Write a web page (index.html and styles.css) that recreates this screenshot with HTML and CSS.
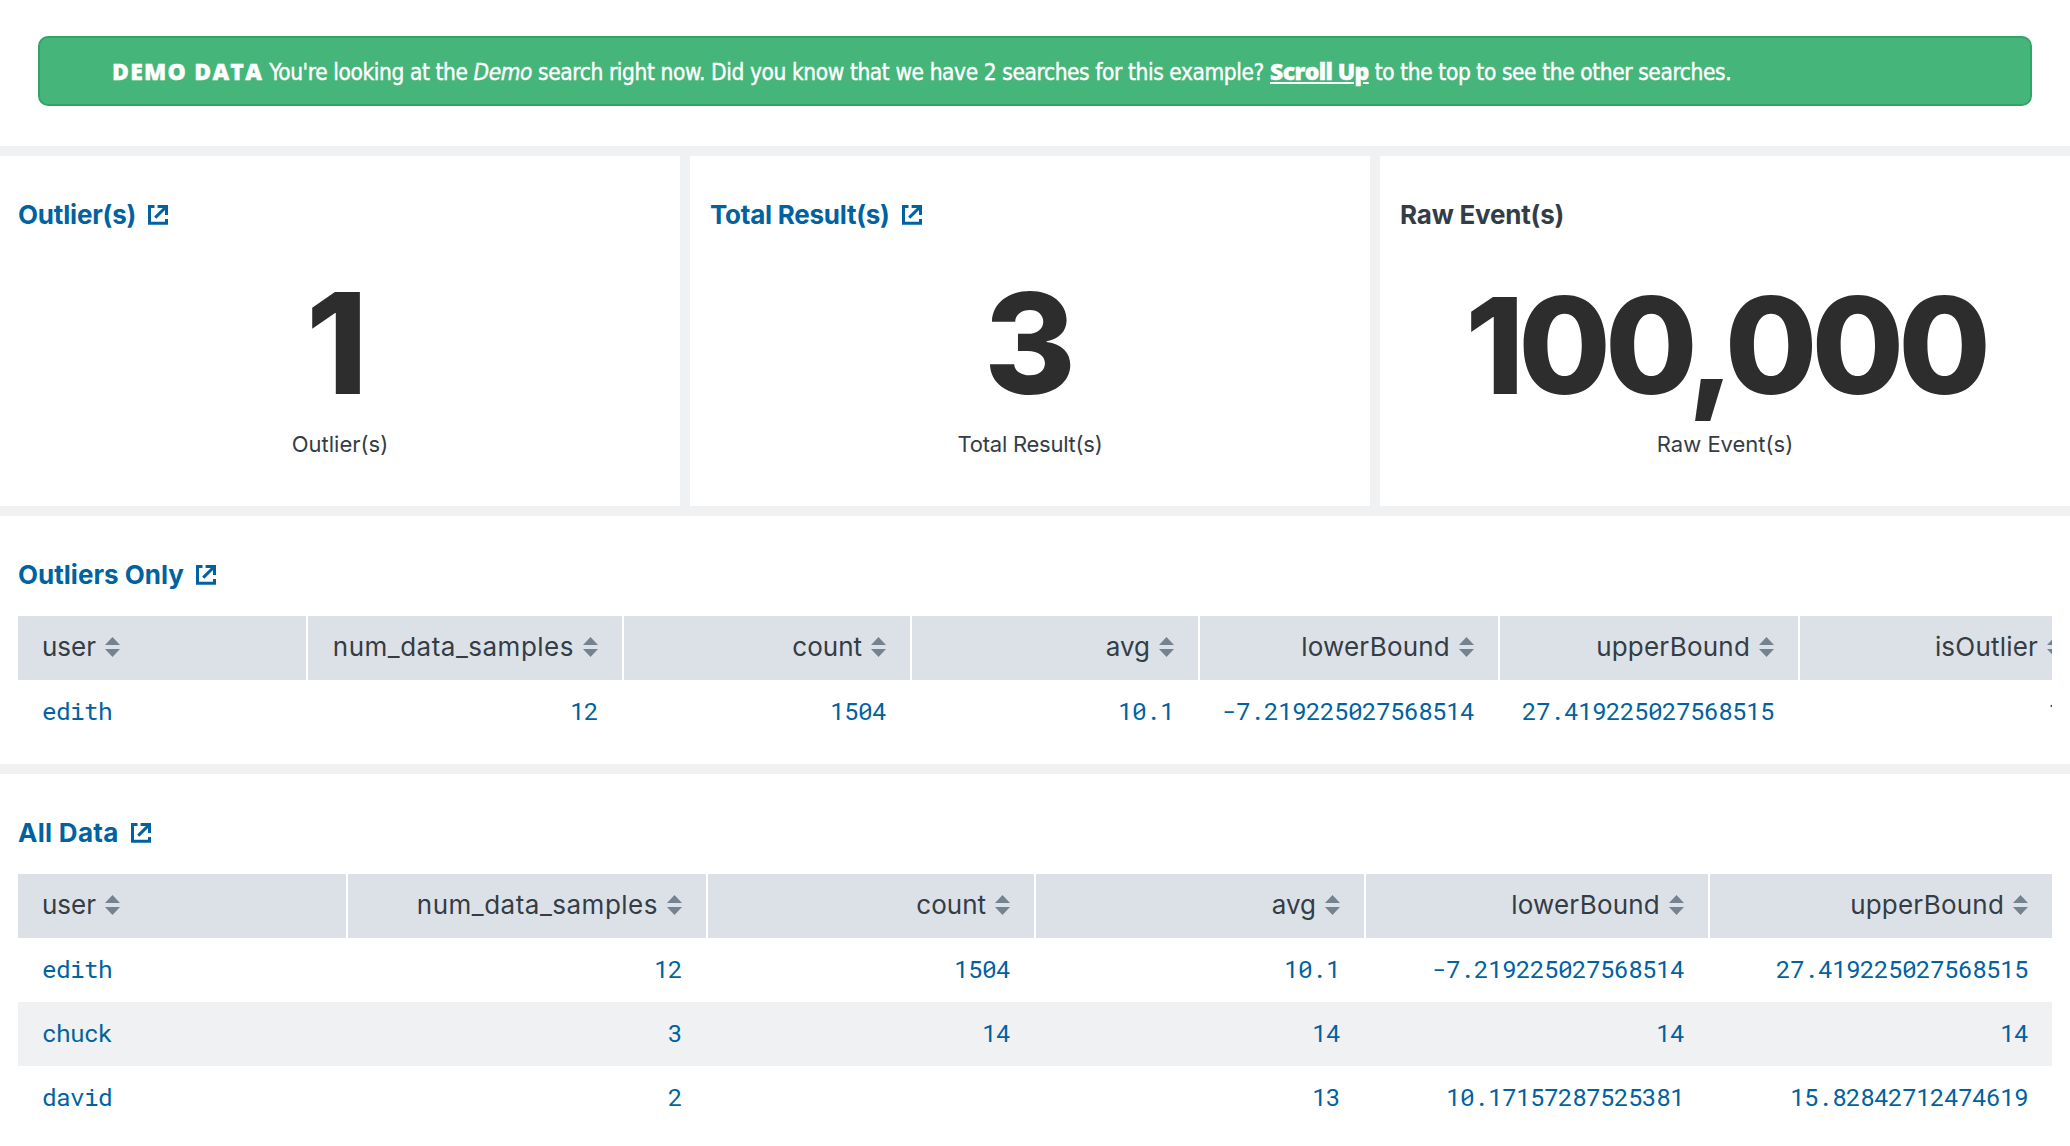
FILE: index.html
```html
<!DOCTYPE html>
<html lang="en">
<head>
<meta charset="utf-8">
<title>Demo Data</title>
<link rel="stylesheet" href="styles.css">
</head>
<body>
<svg class="defs" aria-hidden="true">
  <symbol id="ext" viewBox="0 0 20 20"><path d="M6.5 1.5H1.5V18.3H18.5V14M9.6 1.5H18.5V10M18 2L7.2 12.6" fill="none" stroke="currentColor" stroke-width="3"/></symbol>
  <symbol id="sort" viewBox="0 0 15 20"><path d="M0 8L7.5 0L15 8ZM0 12H15L7.5 20Z" fill="#75828f"/></symbol>
</svg>
<main class="page">
  <section class="intro">
    <div class="banner"><strong class="tag">DEMO DATA</strong> You're looking at the <em>Demo</em> search right now. Did you know that we have 2 searches for this example? <a class="scroll">Scroll Up</a> to the top to see the other searches.</div>
  </section>
  <section class="stats">
    <div class="panel stat">
      <h2 class="title link">Outlier(s)<svg class="ext"><use href="#ext"/></svg></h2>
      <div class="number one">1</div>
      <div class="caption">Outlier(s)</div>
    </div>
    <div class="panel stat">
      <h2 class="title link indent tight">Total Result(s)<svg class="ext"><use href="#ext"/></svg></h2>
      <div class="number">3</div>
      <div class="caption tight">Total Result(s)</div>
    </div>
    <div class="panel stat">
      <h2 class="title indent">Raw Event(s)</h2>
      <div class="number long">100,000</div>
      <div class="caption">Raw Event(s)</div>
    </div>
  </section>
  <section class="panel outliers">
    <h2 class="title link">Outliers Only<svg class="ext"><use href="#ext"/></svg></h2>
    <div class="scroller">
      <table class="grid wide">
        <colgroup><col class="w290"><col class="w316"><col class="w288"><col class="w288"><col class="w300"><col class="w300"><col class="w286"></colgroup>
        <thead><tr>
          <th>user<svg class="sort"><use href="#sort"/></svg></th>
          <th><span class="loose">num_data_samples</span><svg class="sort"><use href="#sort"/></svg></th>
          <th>count<svg class="sort"><use href="#sort"/></svg></th>
          <th>avg<svg class="sort"><use href="#sort"/></svg></th>
          <th><span class="bound">lowerBound</span><svg class="sort"><use href="#sort"/></svg></th>
          <th><span class="bound">upperBound</span><svg class="sort"><use href="#sort"/></svg></th>
          <th><span class="bound">isOutlier</span><svg class="sort"><use href="#sort"/></svg></th>
        </tr></thead>
        <tbody>
          <tr><td>edith</td><td>12</td><td>1504</td><td>10.1</td><td>-7.219225027568514</td><td>27.419225027568515</td><td>1</td></tr>
        </tbody>
      </table>
    </div>
  </section>
  <section class="panel all">
    <h2 class="title link"><span class="roomy">All Data</span><svg class="ext"><use href="#ext"/></svg></h2>
    <div class="scroller">
      <table class="grid full">
        <colgroup><col class="w330"><col class="w360"><col class="w328"><col class="w330"><col class="w344"><col class="w342"></colgroup>
        <thead><tr>
          <th>user<svg class="sort"><use href="#sort"/></svg></th>
          <th><span class="loose">num_data_samples</span><svg class="sort"><use href="#sort"/></svg></th>
          <th>count<svg class="sort"><use href="#sort"/></svg></th>
          <th>avg<svg class="sort"><use href="#sort"/></svg></th>
          <th><span class="bound">lowerBound</span><svg class="sort"><use href="#sort"/></svg></th>
          <th><span class="bound">upperBound</span><svg class="sort"><use href="#sort"/></svg></th>
        </tr></thead>
        <tbody>
          <tr><td>edith</td><td>12</td><td>1504</td><td>10.1</td><td>-7.219225027568514</td><td>27.419225027568515</td></tr>
          <tr><td>chuck</td><td>3</td><td>14</td><td>14</td><td>14</td><td>14</td></tr>
          <tr><td>david</td><td>2</td><td></td><td>13</td><td>10.17157287525381</td><td>15.82842712474619</td></tr>
        </tbody>
      </table>
    </div>
  </section>
</main>
</body>
</html>
```
FILE: styles.css
```css
* { box-sizing: border-box; }

body {
  margin: 0;
  overflow: hidden;
  background: #f0f1f3;
  color: #343d45;
  font-family: Inter, "Liberation Sans", sans-serif;
}

.defs { display: none; }

.page {
  display: flex;
  flex-direction: column;
  gap: 10px;
  height: 1146px;
}

.intro {
  height: 146px;
  padding: 36px 38px 0;
  background: #fff;
}

.banner {
  height: 70px;
  padding: 1px 72px 0;
  border: 2px solid #2fa566;
  border-radius: 10px;
  background: #45b57a;
  color: #fff;
  font: 22.5px/67px "DejaVu Sans Condensed", "DejaVu Sans", sans-serif;
  letter-spacing: -0.4px;
  -webkit-text-stroke: 0.4px #fff;
  white-space: nowrap;
}

.tag, .scroll {
  font-family: "Open Sans", sans-serif;
  font-weight: 800;
  font-size: 23px;
  line-height: 1;
}
.tag { letter-spacing: 1.25px; }
.scroll { letter-spacing: -0.6px; text-decoration: underline; }

.stats {
  display: grid;
  grid-template-columns: 680px 680px 1fr;
  gap: 10px;
  height: 350px;
}

.panel {
  padding: 43px 18px 0;
  background: #fff;
}

.title {
  display: flex;
  align-items: center;
  gap: 12px;
  margin: 0;
  font-size: 26px;
  font-weight: 700;
  line-height: 32px;
}
.title.indent { padding-left: 2px; }
.title.tight { letter-spacing: -0.3px; }
.stat .title { letter-spacing: -0.2px; }
.link { color: #0062a0; }
.roomy { letter-spacing: 0.3px; }

.ext { width: 20px; height: 20px; }

.number {
  margin-top: 42px;
  height: 140px;
  color: #2d2d2d;
  font-size: 140px;
  font-weight: 800;
  line-height: 140px;
  text-align: center;
}
.number.one { padding-right: 6px; }
.number.long {
  font-size: 134px;
  line-height: 144px;
  letter-spacing: -6px;
}

.caption {
  margin-top: 17px;
  font-size: 22px;
  line-height: 28px;
  text-align: center;
}
.stat .tight { letter-spacing: -0.25px; }

.outliers { height: 248px; }
.all { flex: 1; }

.scroller {
  margin-top: 25px;
  overflow: hidden;
}

.grid {
  table-layout: fixed;
  border-collapse: separate;
  border-spacing: 0;
}
.wide { width: 2068px; }
.full { width: 2034px; }

.w286 { width: 286px; }
.w288 { width: 288px; }
.w290 { width: 290px; }
.w300 { width: 300px; }
.w316 { width: 316px; }
.w328 { width: 328px; }
.w330 { width: 330px; }
.w342 { width: 342px; }
.w344 { width: 344px; }
.w360 { width: 360px; }

.grid th, .grid td {
  height: 64px;
  padding: 0 24px 3px 10px;
  line-height: 61px;
  text-align: right;
  white-space: nowrap;
}
.grid th:first-child, .grid td:first-child {
  padding-left: 24px;
  text-align: left;
}

.grid th {
  border-right: 2px solid #fff;
  background: #dce1e8;
  font-size: 26px;
  font-weight: 400;
}
.grid td:not(:last-child) { border-right: 2px solid transparent; }
.grid th:last-child { border-right: 0; }

.grid td {
  color: #0062a0;
  font-family: "Roboto Mono", "DejaVu Sans Mono", monospace;
  font-size: 24.5px;
  letter-spacing: -0.7px;
}
.grid tbody tr:nth-child(even) td { background: #f0f1f3; }

.loose { letter-spacing: 0.5px; }
.bound { letter-spacing: 0.2px; }

.sort {
  width: 15px;
  height: 20px;
  margin-left: 9px;
  vertical-align: -1px;
}
```
